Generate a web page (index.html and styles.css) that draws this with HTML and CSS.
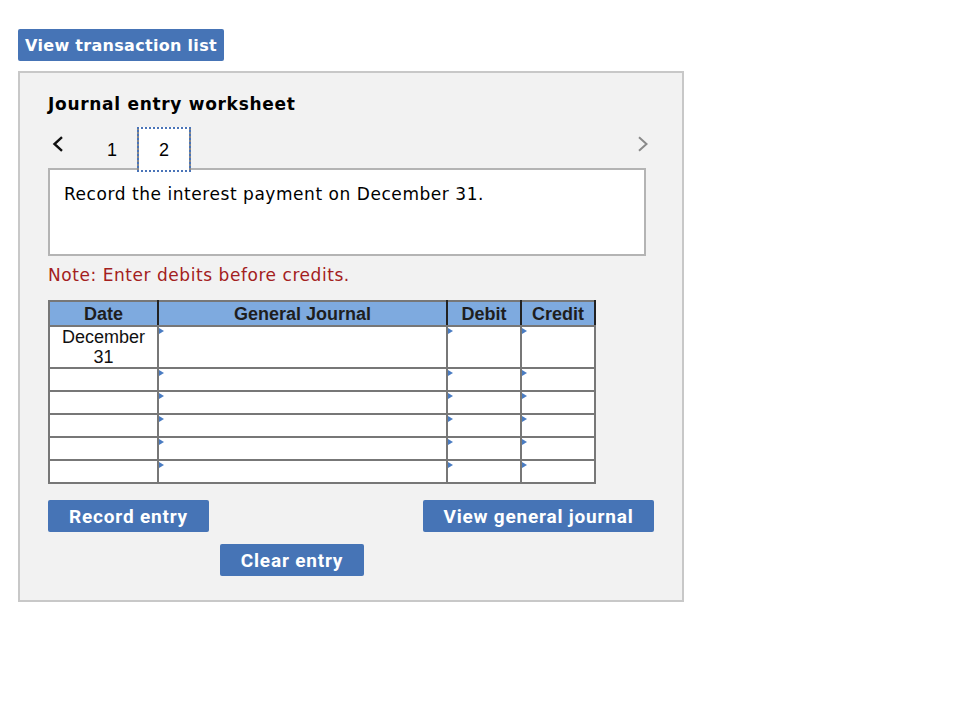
FILE: index.html
```html
<!DOCTYPE html>
<html>
<head>
<meta charset="utf-8">
<link rel="stylesheet" href="styles.css">
</head>
<body>
<button class="btn btn-top">View transaction list</button>
<div class="panel">
  <h2 class="title">Journal entry worksheet</h2>
  <div class="tabs">
    <span class="arrow arrow-left"><svg width="12" height="16" viewBox="0 0 12 16"><path d="M10 1.2 L2.5 8 L10 14.8" fill="none" stroke="#111" stroke-width="2.4"/></svg></span>
    <span class="tab tab-one">1</span>
    <span class="tab tab-active">2</span>
    <span class="arrow arrow-right"><svg width="12" height="16" viewBox="0 0 12 16"><path d="M2 1.2 L9.5 8 L2 14.8" fill="none" stroke="#8a8a8a" stroke-width="2"/></svg></span>
  </div>
  <div class="desc">Record the interest payment on December 31.</div>
  <p class="note">Note: Enter debits before credits.</p>
  <table class="journal">
    <colgroup>
      <col class="c-date"><col class="c-gj"><col class="c-dr"><col class="c-cr">
    </colgroup>
    <thead>
      <tr><th>Date</th><th>General Journal</th><th>Debit</th><th>Credit</th></tr>
    </thead>
    <tbody>
      <tr class="first"><td class="date">December<br>31</td><td class="in"></td><td class="in"></td><td class="in"></td></tr>
      <tr><td class="date"></td><td class="in"></td><td class="in"></td><td class="in"></td></tr>
      <tr><td class="date"></td><td class="in"></td><td class="in"></td><td class="in"></td></tr>
      <tr><td class="date"></td><td class="in"></td><td class="in"></td><td class="in"></td></tr>
      <tr><td class="date"></td><td class="in"></td><td class="in"></td><td class="in"></td></tr>
      <tr><td class="date"></td><td class="in"></td><td class="in"></td><td class="in"></td></tr>
    </tbody>
  </table>
  <div class="actions">
    <button class="btn btn-act btn-record">Record entry</button>
    <button class="btn btn-act btn-view">View general journal</button>
  </div>
  <div class="actions2">
    <button class="btn btn-act btn-clear">Clear entry</button>
  </div>
</div>
</body>
</html>
```

FILE: styles.css
```css
html, body {
  margin: 0;
  padding: 0;
  background: #fff;
}
body {
  padding: 29px 0 0 18px;
  font-family: "DejaVu Sans", Verdana, sans-serif;
  color: #000;
}
.btn {
  border: none;
  background: #4674b6;
  color: #fff;
  border-radius: 2px;
  cursor: pointer;
  padding: 0;
  display: block;
}
.btn-top {
  width: 206px;
  height: 32px;
  font-family: "DejaVu Sans", Verdana, sans-serif;
  font-weight: bold;
  font-size: 16px;
  letter-spacing: 0.3px;
}
.panel {
  margin-top: 10px;
  width: 634px;
  height: 527px;
  border: 2px solid #c8c8c8;
  background: #f2f2f2;
  padding: 0 0 0 28px;
  box-sizing: content-box;
}
.title {
  margin: 19px 0 0 0;
  font-size: 17px;
  font-weight: bold;
  line-height: 24px;
  letter-spacing: 0.7px;
}
.tabs {
  display: flex;
  align-items: flex-start;
  height: 41px;
  margin-top: 11px;
  width: 606px;
}
.arrow {
  display: block;
  line-height: 0;
}
.arrow-left {
  margin-left: 4px;
  margin-top: 9px;
}
.arrow-right {
  margin-left: auto;
  margin-top: 9px;
  margin-right: 5px;
}
.tab {
  font-family: "Liberation Sans", Arial, sans-serif;
  font-size: 18px;
  text-align: center;
  line-height: 20px;
  box-sizing: border-box;
}
.tab-one {
  margin-left: 32px;
  width: 32px;
  padding-top: 13px;
}
.tab-active {
  position: relative;
  z-index: 2;
  margin-left: 9px;
  height: 45px;
  width: 54px;
  background: #fff;
  border-left: 2px solid #888;
  border-right: 2px solid #888;
  outline: 2px dotted #4a74b8;
  outline-offset: -2px;
  padding-top: 13px;
}
.desc {
  position: relative;
  width: 580px;
  height: 70px;
  padding: 14px 0 0 14px;
  border: 2px solid #b4b4b4;
  background: #fff;
  box-sizing: content-box;
  font-size: 17px;
  letter-spacing: 0.55px;
  line-height: 20px;
}
.note {
  margin: 8px 0 0 0;
  color: #a32020;
  font-size: 17px;
  letter-spacing: 0.55px;
  line-height: 22px;
}
.journal {
  margin-top: 14px;
  border-collapse: collapse;
  table-layout: fixed;
  width: 546px;
  font-family: "Liberation Sans", Arial, sans-serif;
  font-size: 18px;
}
.c-date { width: 109px; }
.c-gj { width: 289px; }
.c-dr { width: 74px; }
.c-cr { width: 74px; }
.journal th {
  background: #7eaadf;
  font-weight: bold;
  color: #1e1e1e;
  height: 23px;
  padding: 0;
  line-height: 20px;
  border: 2px solid #777;
  border-left-color: #222;
  border-right-color: #222;
}
.journal th:first-child { border-left-color: #777; }
.journal th:last-child { border-right-color: #222; }
.journal td {
  background: #fff;
  border: 2px solid #777;
  height: 21px;
  padding: 0;
  position: relative;
}
.journal tr.first td {
  height: 40px;
}
.journal td.date {
  text-align: center;
  line-height: 20px;
  vertical-align: top;
  color: #111;
}
.journal td.in::before {
  content: "";
  position: absolute;
  left: 0;
  top: 1px;
  width: 0;
  height: 0;
  border-top: 3.5px solid transparent;
  border-bottom: 3.5px solid transparent;
  border-left: 5px solid #4a7cc2;
}
.actions {
  display: flex;
  justify-content: space-between;
  width: 606px;
  margin-top: 16px;
}
.btn-act {
  height: 32px;
  font-family: Roboto, "Liberation Sans", sans-serif;
  font-weight: bold;
  font-size: 19px;
  letter-spacing: 0.8px;
}
.btn-record { width: 161px; }
.btn-view { width: 231px; }
.actions2 {
  margin-top: 12px;
  padding-left: 172px;
}
.btn-clear { width: 144px; }
```
